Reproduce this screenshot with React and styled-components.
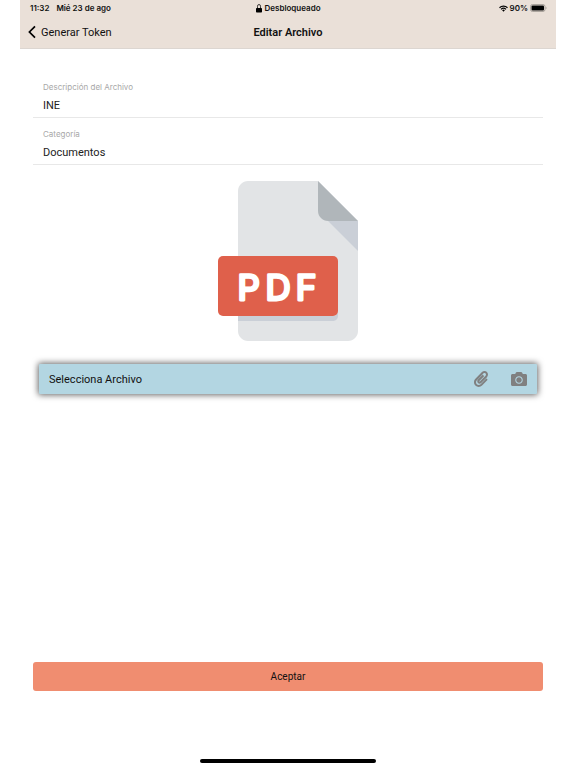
import { useState } from "react";
import styled, { createGlobalStyle } from "styled-components";
import { FaCamera, FaPaperclip } from "react-icons/fa";

export default function App() {
  const [description, setDescription] = useState("INE");
  const [category, setCategory] = useState("Documentos");

  return (
    <>
      <GlobalStyle />
      <Screen>
        <Header>
          <StatusBar>
            <StatusGroup $gap="7px">
              <span>11:32</span>
              <span>Mié 23 de ago</span>
            </StatusGroup>
            <StatusGroup $gap="2px">
              <LockIcon />
              <span>Desbloqueado</span>
            </StatusGroup>
            <StatusGroup $gap="2px" $align="flex-end">
              <WifiIcon />
              <span>90%</span>
              <BatteryIcon />
            </StatusGroup>
          </StatusBar>
          <NavBar>
            <BackLink href="#token">
              <BackIcon />
              Generar Token
            </BackLink>
            <Title>Editar Archivo</Title>
          </NavBar>
        </Header>

        <Content>
          <Field>
            <Label htmlFor="description">Descripción del Archivo</Label>
            <Input
              id="description"
              value={description}
              onChange={(e) => setDescription(e.target.value)}
            />
          </Field>
          <Field>
            <Label htmlFor="category">Categoría</Label>
            <Input
              id="category"
              value={category}
              onChange={(e) => setCategory(e.target.value)}
            />
          </Field>

          <Preview>
            <PdfIcon />
          </Preview>

          <FilePicker>
            <PickerText>Selecciona Archivo</PickerText>
            <IconButton type="button" aria-label="Adjuntar archivo">
              <FaPaperclip size={16} />
            </IconButton>
            <IconButton type="button" aria-label="Tomar foto">
              <FaCamera size={16} />
            </IconButton>
          </FilePicker>

          <SubmitButton type="button">Aceptar</SubmitButton>
        </Content>

        <HomeIndicator />
      </Screen>
    </>
  );
}

function LockIcon() {
  return (
    <svg width="6" height="9" viewBox="0 0 12 18" aria-hidden="true">
      <path d="M3 9V4.500a3 3.500 0 0 1 6 0v4.500" fill="none" stroke="#111" strokeWidth="1.600" />
      <rect x="0" y="8" width="12" height="9" rx="1.500" fill="#000" />
    </svg>
  );
}

function WifiIcon() {
  return (
    <svg width="9" height="7" viewBox="0 0 18 14" aria-hidden="true">
      <g fill="none" stroke="#000" strokeWidth="2.400">
        <path d="M1 5.500a11.500 11.500 0 0 1 16 0" />
        <path d="M4 8.700a7.200 7.200 0 0 1 10 0" />
      </g>
      <path d="M9 13.500l-2.800-3a4 4 0 0 1 5.600 0z" fill="#000" />
    </svg>
  );
}

function BatteryIcon() {
  return (
    <svg width="17" height="8" viewBox="0 0 34 16" aria-hidden="true">
      <rect x="1" y="1" width="29" height="14" rx="4" fill="none" stroke="#9c958f" strokeWidth="1.600" />
      <rect x="3" y="3" width="25" height="10" rx="2" fill="#000" />
      <path d="M31.500 5.500c2 .5 2 4.500 0 5z" fill="#9c958f" />
    </svg>
  );
}

function BackIcon() {
  return (
    <svg width="8" height="14" viewBox="0 0 8 14" aria-hidden="true">
      <path d="M7 1.300L1.400 7L7 12.700" fill="none" stroke="#000" strokeWidth="1.700" />
    </svg>
  );
}

function PdfIcon() {
  return (
    <svg width="160" height="160" viewBox="0 0 512 512" role="img" aria-label="PDF">
      <path
        fill="#e2e4e6"
        d="M128 0c-17.600 0-32 14.400-32 32v448c0 17.600 14.400 32 32 32h320c17.600 0 32-14.400 32-32V128L352 0H128z"
      />
      <path fill="#b0b6ba" d="M384 128h96L352 0v96c0 17.600 14.400 32 32 32z" />
      <path fill="#cacfd7" d="M480 224l-96-96h96z" />
      <path fill="#cacfd7" d="M400 432H96v16h304c8.800 0 16-7.200 16-16v-16c0 8.800-7.200 16-16 16z" />
      <rect x="32" y="240" width="384" height="192" rx="16" fill="#df604b" />
      <PdfText x="94 184 281" y="381">
        PDF
      </PdfText>
    </svg>
  );
}

const GlobalStyle = createGlobalStyle`
  * {
    box-sizing: border-box;
  }

  body {
    margin: 0;
    background: #fff;
    color: #111;
    font-family: Roboto, "Liberation Sans", sans-serif;
  }
`;

const Screen = styled.div`
  display: flex;
  flex-direction: column;
  min-height: 100vh;
  margin: 0 20px;
`;

const Header = styled.header`
  background: #eae0d8;
  border-bottom: 1px solid #dcd6d1;
`;

const StatusBar = styled.div`
  display: grid;
  grid-template-columns: 1fr auto 1fr;
  align-items: center;
  height: 16px;
  padding: 0 9px 0 10px;
  font-family: Inter, sans-serif;
  font-size: 8px;
  font-weight: 600;
`;

const StatusGroup = styled.div`
  display: flex;
  align-items: center;
  justify-content: ${({ $align }) => $align || "flex-start"};
  gap: ${({ $gap }) => $gap};
`;

const NavBar = styled.nav`
  display: grid;
  grid-template-columns: 1fr auto 1fr;
  align-items: center;
  height: 32px;
  padding: 0 8px;
  font-size: 11px;
`;

const BackLink = styled.a`
  display: flex;
  align-items: center;
  gap: 5px;
  color: inherit;
  text-decoration: none;
`;

const Title = styled.h1`
  margin: 0;
  font-size: 11px;
  font-weight: 600;
`;

const Content = styled.main`
  display: flex;
  flex: 1;
  flex-direction: column;
  padding: 22px 13px 0;
`;

const Field = styled.div`
  display: flex;
  flex-direction: column;
  gap: 4px;
  padding: 10px 10px 4px;
  border-bottom: 1px solid #e8e8e8;
`;

const Label = styled.label`
  color: #a8a8a8;
  font-family: Inter, sans-serif;
  font-size: 8px;
  line-height: 12px;
`;

const Input = styled.input`
  width: 100%;
  height: 16px;
  padding: 0;
  border: 0;
  outline: 0;
  background: transparent;
  color: #222;
  font-family: inherit;
  font-size: 11px;
`;

const Preview = styled.div`
  display: flex;
  justify-content: center;
  margin: 16px 0 23px;
`;

const PdfText = styled.text`
  fill: #fff;
  stroke: #fff;
  stroke-width: 9px;
  stroke-linejoin: round;
  font-family: Inter, sans-serif;
  font-size: 112px;
  font-weight: 400;
  text-rendering: geometricPrecision;
`;

const FilePicker = styled.div`
  display: flex;
  align-items: center;
  gap: 22px;
  height: 30px;
  margin: 0 6px;
  padding: 0 10px;
  border-radius: 1px;
  background: #b3d6e2;
  box-shadow: 0 0 6px 1px rgba(0, 0, 0, 0.6);
`;

const PickerText = styled.span`
  flex: 1;
  font-size: 11px;
`;

const IconButton = styled.button`
  display: flex;
  padding: 0;
  border: 0;
  background: none;
  color: #808080;
`;

const SubmitButton = styled.button`
  height: 29px;
  margin-top: auto;
  border: 0;
  border-radius: 3px;
  background: #f08d70;
  color: #111;
  font-family: inherit;
  font-size: 10px;
`;

const HomeIndicator = styled.div`
  align-self: center;
  width: 176px;
  height: 4px;
  margin: 68px 0 5px;
  border-radius: 2px;
  background: #000;
`;
